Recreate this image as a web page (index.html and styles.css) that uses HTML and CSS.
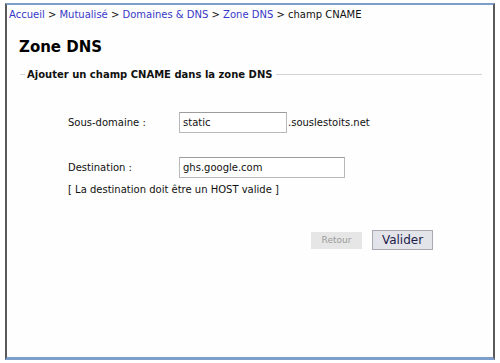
FILE: index.html
```html
<!DOCTYPE html>
<html lang="fr">
<head>
<meta charset="utf-8">
<title>Zone DNS</title>
<link rel="stylesheet" href="styles.css">
</head>
<body>
<div class="frame">
  <div class="crumbs"><a href="#">Accueil</a> &gt; <a href="#">Mutualisé</a> &gt; <a href="#">Domaines &amp; DNS</a> &gt; <a href="#">Zone DNS</a> &gt; champ CNAME</div>
  <h1 class="title">Zone DNS</h1>
  <fieldset class="box">
    <legend class="legend">Ajouter un champ CNAME dans la zone DNS</legend>
    <div class="content">
      <div class="row row-first">
        <label class="label">Sous-domaine :</label>
        <input class="field field-short" type="text" value="static">
        <span class="suffix">.souslestoits.net</span>
      </div>
      <div class="row row-second">
        <label class="label">Destination :</label>
        <input class="field field-long" type="text" value="ghs.google.com">
      </div>
      <div class="hint">[ La destination doit être un HOST valide ]</div>
      <div class="actions">
        <button class="btn btn-back" type="button" disabled>Retour</button>
        <button class="btn btn-ok" type="button">Valider</button>
      </div>
    </div>
  </fieldset>
</div>
</body>
</html>
```
FILE: styles.css
```css
html, body {
  margin: 0;
  padding: 0;
  background: #ffffff;
}
body {
  font-family: "DejaVu Sans", Verdana, sans-serif;
  font-size: 10px;
  color: #111;
}
.frame {
  margin: 3px 5px 0 5px;
  height: 352px;
  background: #fdfefd;
  border-top: 2px solid #7d9dcb;
  border-bottom: 3px solid #7d9dcb;
  border-left: 2px solid #5a5a5a;
  border-right: 2px solid #5a5a5a;
}
.crumbs {
  padding: 3px 0 0 2px;
  line-height: 13px;
}
.crumbs a {
  color: #3838c8;
  text-decoration: none;
}
.title {
  margin: 17px 0 0 12px;
  font-size: 15px;
  line-height: 18px;
  font-weight: bold;
  color: #000;
}
.box {
  margin: 13px 11px 0 13px;
  padding: 0;
  border: none;
  border-top: 1px solid #d4d4d4;
  min-width: 0;
}
.legend {
  margin-left: 5px;
  padding: 0 4px 0 2px;
  font-weight: bold;
  font-size: 10px;
  color: #111;
}
.content {
  padding-left: 48px;
}
.row {
  display: flex;
  align-items: center;
}
.row-first {
  margin-top: 32px;
}
.row-second {
  margin-top: 24px;
}
.label {
  width: 111px;
  flex: none;
}
.field {
  box-sizing: border-box;
  height: 21px;
  margin: 0;
  padding: 0 3px;
  border: 1px solid #b9b9b9;
  border-top-color: #9c9c9c;
  background: #fff;
  font-family: "DejaVu Sans", Verdana, sans-serif;
  font-size: 10px;
  color: #111;
}
.field-short { width: 108px; }
.field-long { width: 166px; }
.suffix {
  margin-left: 1px;
}
.hint {
  margin-top: 5px;
  line-height: 13px;
}
.actions {
  display: flex;
  align-items: center;
  gap: 10px;
  margin-top: 34px;
  padding-left: 243px;
}
.btn {
  font-family: "DejaVu Sans", Verdana, sans-serif;
  margin: 0;
  padding: 0;
  cursor: default;
}
.btn-back {
  width: 51px;
  height: 17px;
  border: none;
  background: #e6e6e6;
  color: #9a9a9a;
  font-size: 9px;
}
.btn-ok {
  width: 61px;
  height: 20px;
  border: 1px solid #a9a9b3;
  background: #e3e3ea;
  color: #1c1c4a;
  font-size: 12px;
}
```
